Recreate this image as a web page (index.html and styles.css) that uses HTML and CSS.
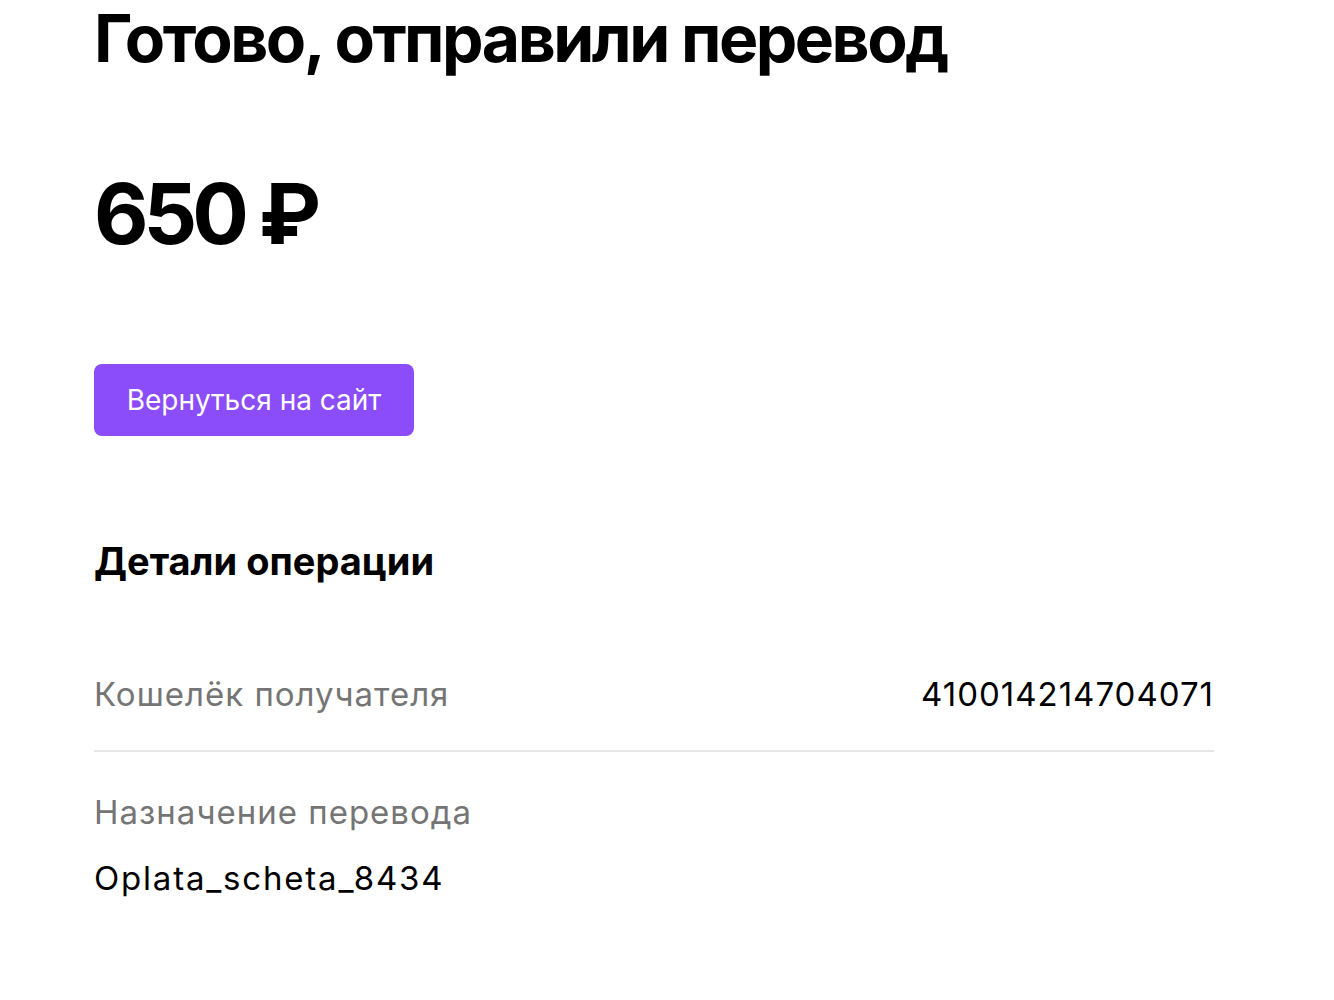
FILE: index.html
```html
<!DOCTYPE html>
<html lang="ru">
<head>
<meta charset="utf-8">
<title>Готово</title>
<link rel="stylesheet" href="styles.css">
</head>
<body>
<main class="page">
  <h1 class="title">Готово, отправили перевод</h1>
  <div class="amount">650 ₽</div>
  <a class="btn" href="#">Вернуться на сайт</a>
  <h2 class="details-title">Детали операции</h2>
  <div class="row row-inline">
    <span class="label">Кошелёк получателя</span>
    <span class="value">410014214704071</span>
  </div>
  <div class="row row-stack">
    <span class="label">Назначение перевода</span>
    <span class="value purpose">Oplata_scheta_8434</span>
  </div>
</main>
</body>
</html>
```

FILE: styles.css
```css
* { box-sizing: border-box; }
html, body { margin: 0; padding: 0; background: #fff; }
body {
  font-family: "Inter", "Noto Sans", sans-serif;
  color: #000;
}
.page {
  width: 1120px;
  margin-left: 94px;
  display: flex;
  flex-direction: column;
  align-items: flex-start;
}
.title {
  margin: 0;
  font-size: 66px;
  line-height: 76px;
  font-weight: 700;
  letter-spacing: -2.5px;
}
.amount {
  margin-top: 88px;
  font-size: 84px;
  line-height: 100px;
  font-weight: 700;
  letter-spacing: -5px;
}
.btn {
  margin-top: 100px;
  width: 320px;
  height: 72px;
  display: flex;
  align-items: center;
  justify-content: center;
  background: #8b4cf9;
  color: #fff;
  border-radius: 8px;
  font-size: 28px;
  text-decoration: none;
}
.details-title {
  margin: 100px 0 0;
  font-size: 38px;
  line-height: 50px;
  font-weight: 700;
}
.row {
  width: 100%;
  font-size: 33px;
  line-height: 40px;
  letter-spacing: 1px;
}
.label { color: #757575; }
.row-inline {
  margin-top: 88px;
  display: flex;
  justify-content: space-between;
  padding-bottom: 36px;
  border-bottom: 2px solid #e6e6e6;
}
.row-stack {
  margin-top: 40px;
  display: flex;
  flex-direction: column;
  gap: 26px;
}
.purpose { letter-spacing: 1.8px; }
```
